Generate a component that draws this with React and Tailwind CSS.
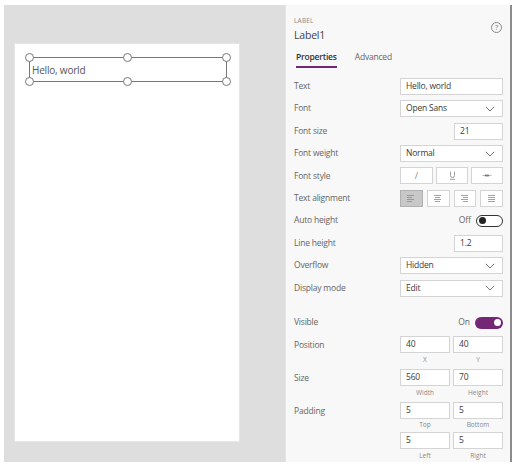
import React from "react";

const F = { fontFamily: '"Open Sans", "Noto Sans", sans-serif' };

function Chevron() {
  return (
    <svg width="10" height="6" viewBox="0 0 10 6" className="absolute right-[7px] top-1/2 -translate-y-1/2">
      <path d="M0.8 0.8l4.2 4.2 4.2-4.2" fill="none" stroke="#666" strokeWidth="0.9" />
    </svg>
  );
}

function Input({ value, className = "" }) {
  return (
    <div className={`h-[17px] bg-white border border-[#d4d4d4] flex items-center px-[5px] text-[8.5px] tracking-[-0.2px] text-[#3a3a3a] ${className}`}>
      {value}
    </div>
  );
}

function Select({ value }) {
  return (
    <div className="relative h-[17px] w-[103px] bg-white border border-[#d4d4d4] flex items-center px-[5px] text-[8.5px] tracking-[-0.2px] text-[#3a3a3a]">
      {value}
      <Chevron />
    </div>
  );
}

function Row({ label, children }) {
  return (
    <div className="h-[22.45px] flex items-center justify-between">
      <span className="text-[8.5px] tracking-[-0.2px] text-[#666]">{label}</span>
      {children}
    </div>
  );
}

function AlignIcon({ type }) {
  const lines = {
    left: [[0, 7], [0, 5], [0, 7], [0, 5]],
    center: [[0, 7], [1, 6], [0, 7], [1, 6]],
    right: [[0, 7], [2, 7], [0, 7], [2, 7]],
    justify: [[0, 7], [0, 7], [0, 7], [0, 7]],
  }[type];
  return (
    <svg width="8" height="7" viewBox="0 0 8 7">
      {lines.map(([a, b], i) => (
        <line key={i} x1={a} x2={b} y1={0.5 + i * 2} y2={0.5 + i * 2} stroke="#8a8a8a" strokeWidth="0.8" />
      ))}
    </svg>
  );
}

function Pair({ a, b, la, lb, capH = "h-[14px]" }) {
  return (
    <div className="flex justify-between">
      <div className="w-[114px]" />
      <div className="flex flex-col w-[103px]">
        <div className="flex gap-[3px]">
          <Input value={a} className="w-[50px]" />
          <Input value={b} className="w-[50px]" />
        </div>
        {la !== undefined && (
          <div className={`flex gap-[3px] ${capH} items-center text-[6.5px] text-[#888]`}>
            <span className="w-[50px] text-center">{la}</span>
            <span className="w-[50px] text-center">{lb}</span>
          </div>
        )}
      </div>
    </div>
  );
}

function LabeledPair({ label, a, b, la, lb, capH }) {
  return (
    <div className="relative">
      <span className="absolute left-0 top-[3px] text-[8.5px] tracking-[-0.2px] text-[#666]">{label}</span>
      <Pair a={a} b={b} la={la} lb={lb} capH={capH} />
    </div>
  );
}

function Handle({ className }) {
  return <div className={`absolute w-[9px] h-[9px] rounded-full border border-[#777] bg-white ${className}`} />;
}

export default function App() {
  return (
    <div className="w-[520px] h-[473px] bg-white flex pt-[5px] pl-[4px]" style={F}>
      <div className="w-[281px] h-[457px] bg-[#dedede] pl-[10px] pt-[38px]">
        <div className="relative w-[226px] h-[399px] bg-white border border-[#e6e6e6]">
          <div className="absolute left-[14px] top-[13px] w-[198px] h-[25px] border border-[#777]">
            <span className="absolute left-[2px] top-[5px] text-[10px] tracking-[-0.2px] text-[#555]">Hello, world</span>
            <Handle className="-left-[5px] -top-[5px]" />
            <Handle className="left-[93px] -top-[5px]" />
            <Handle className="-right-[5px] -top-[5px]" />
            <Handle className="-left-[5px] -bottom-[5px]" />
            <Handle className="left-[93px] -bottom-[5px]" />
            <Handle className="-right-[5px] -bottom-[5px]" />
          </div>
        </div>
      </div>
      <div className="w-[227px] h-[457px] bg-[#f8f8f8] border-l border-[#e3e3e3] border-r-2 border-r-[#8c8c8c] flex flex-col">
        <div className="relative px-[8px] pt-[10px]">
          <div className="text-[6.5px] text-[#888] leading-[12px] tracking-[0.2px]">LABEL</div>
          <div className="text-[10.5px] tracking-[-0.2px] text-[#444] leading-[14px] mt-[1px]">Label1</div>
          <div className="absolute right-[8px] top-[17px] w-[11px] h-[11px] rounded-full border border-[#888] flex items-center justify-center text-[7.5px] text-[#777] leading-none">?</div>
          <div className="flex gap-[18px] mt-[8px] pl-[2px]">
            <div className="flex flex-col">
              <span className="text-[8.5px] tracking-[-0.2px] font-semibold text-[#333] leading-[14px]">Properties</span>
              <div className="h-[2px] bg-[#742774] mt-[2px]" />
            </div>
            <span className="text-[8.5px] tracking-[-0.2px] text-[#666] leading-[14px]">Advanced</span>
          </div>
        </div>
        <div className="h-px bg-[#e0e0e0]" />
        <div className="px-[8px] pr-[7px] pt-[7px] pb-[6px]">
          <Row label="Text"><Input value="Hello, world" className="w-[103px]" /></Row>
          <Row label="Font"><Select value="Open Sans" /></Row>
          <Row label="Font size"><Input value="21" className="w-[49px]" /></Row>
          <Row label="Font weight"><Select value="Normal" /></Row>
          <Row label="Font style">
            <div className="flex gap-[3px] w-[103px]">
              <div className="w-[33px] h-[17px] bg-white border border-[#d4d4d4] flex items-center justify-center text-[9px] text-[#888]">/</div>
              <div className="w-[32px] h-[17px] bg-white border border-[#d4d4d4] flex items-center justify-center">
                <svg width="7" height="9" viewBox="0 0 7 9"><path d="M1.5 0.5v4a2 2 0 0 0 4 0v-4" fill="none" stroke="#888" strokeWidth="0.8" /><line x1="1" x2="6" y1="8.3" y2="8.3" stroke="#888" strokeWidth="0.8" /></svg>
              </div>
              <div className="w-[32px] h-[17px] bg-white border border-[#d4d4d4] flex items-center justify-center">
                <svg width="10" height="5" viewBox="0 0 10 5"><line x1="0.5" x2="9.5" y1="2.5" y2="2.5" stroke="#999" strokeWidth="0.7" /><line x1="3" x2="7" y1="2.5" y2="2.5" stroke="#777" strokeWidth="1.8" /></svg>
              </div>
            </div>
          </Row>
          <Row label="Text alignment">
            <div className="flex gap-[4px] w-[103px]">
              <div className="w-[23px] h-[17px] bg-[#c8c8c8] border border-[#b0b0b0] flex items-center justify-center"><AlignIcon type="left" /></div>
              <div className="w-[23px] h-[17px] bg-white border border-[#d4d4d4] flex items-center justify-center"><AlignIcon type="center" /></div>
              <div className="w-[23px] h-[17px] bg-white border border-[#d4d4d4] flex items-center justify-center"><AlignIcon type="right" /></div>
              <div className="w-[23px] h-[17px] bg-white border border-[#d4d4d4] flex items-center justify-center"><AlignIcon type="justify" /></div>
            </div>
          </Row>
          <Row label="Auto height">
            <div className="flex items-center gap-[5px]">
              <span className="text-[8.5px] text-[#666]">Off</span>
              <div className="w-[27px] h-[12px] rounded-full border-[1.5px] border-[#333] bg-white flex items-center pl-[2px]">
                <div className="w-[7px] h-[7px] rounded-full bg-[#222]" />
              </div>
            </div>
          </Row>
          <Row label="Line height"><Input value="1.2" className="w-[49px]" /></Row>
          <Row label="Overflow"><Select value="Hidden" /></Row>
          <Row label="Display mode"><Select value="Edit" /></Row>
        </div>
        <div className="h-px bg-[#dcdcdc]" />
        <div className="px-[8px] pr-[7px] pt-[6px]">
          <Row label="Visible">
            <div className="flex items-center gap-[5px]">
              <span className="text-[8.5px] text-[#666]">On</span>
              <div className="w-[28px] h-[12px] rounded-full bg-[#742774] flex items-center justify-end pr-[2px]">
                <div className="w-[7px] h-[7px] rounded-full bg-white" />
              </div>
            </div>
          </Row>
          <div className="mt-[2px] flex flex-col gap-[2px]">
            <LabeledPair label="Position" a="40" b="40" la="X" lb="Y" />
            <LabeledPair label="Size" a="560" b="70" la="Width" lb="Height" />
            <div className="flex flex-col">
              <LabeledPair label="Padding" a="5" b="5" la="Top" lb="Bottom" capH="h-[13px]" />
              <Pair a="5" b="5" la="Left" lb="Right" />
            </div>
          </div>
        </div>
      </div>
    </div>
  );
}
